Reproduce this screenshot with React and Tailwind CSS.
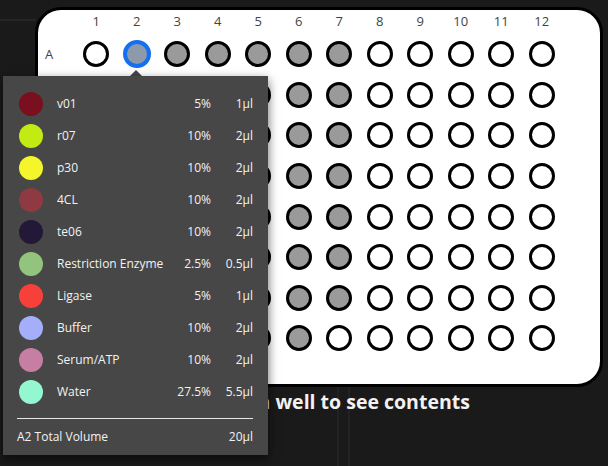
import React from 'react';

const COLS = [1, 2, 3, 4, 5, 6, 7, 8, 9, 10, 11, 12];
const ROWS = ['A', 'B', 'C', 'D', 'E', 'F', 'G', 'H'];

const ingredients = [
    { name: 'v01', color: '#7a0f1f', pct: '5%', vol: '1µl' },
    { name: 'r07', color: '#c2eb12', pct: '10%', vol: '2µl' },
    { name: 'p30', color: '#f5f52c', pct: '10%', vol: '2µl' },
    { name: '4CL', color: '#8f3a42', pct: '10%', vol: '2µl' },
    { name: 'te06', color: '#241838', pct: '10%', vol: '2µl' },
    { name: 'Restriction Enzyme', color: '#93c47d', pct: '2.5%', vol: '0.5µl' },
    { name: 'Ligase', color: '#f8403a', pct: '5%', vol: '1µl' },
    { name: 'Buffer', color: '#a4aefa', pct: '10%', vol: '2µl' },
    { name: 'Serum/ATP', color: '#c67ea2', pct: '10%', vol: '2µl' },
    { name: 'Water', color: '#93f7d0', pct: '27.5%', vol: '5.5µl' },
];

function isFilled(row, col) {
    if (col < 3) return false;
    if (row === 'H' && col === 7) return false;
    return col <= 7;
}

function Well({ row, col }) {
    if (row === 'A' && col === 2) {
        return <div className="w-[28px] h-[28px] rounded-full border-[4px] border-[#1570ee] bg-[#8e9aab]" />;
    }
    return (
        <div
            className={`w-[26px] h-[26px] rounded-full border-[3px] border-black ${isFilled(row, col) ? 'bg-[#9a9a9a]' : 'bg-white'}`}
        />
    );
}

export default function App() {
    return (
        <div
            className="relative w-[608px] h-[466px] overflow-hidden bg-[#1a1a1a]"
            style={{ fontFamily: '"Open Sans", "Liberation Sans", sans-serif' }}
        >
            {/* faint panel edges in the background */}
            <div className="absolute left-0 top-[19px] w-[36px] h-[2px] bg-[#262626]" />
            <div className="absolute left-[337px] top-[386px] w-[2px] h-[80px] bg-[#222]" />
            <div className="absolute left-[348px] top-[386px] w-[2px] h-[80px] bg-[#222]" />

            <div className="relative pt-[7px] pl-[35px]">
                <div className="w-[568px] h-[380px] rounded-[26px] border-[3px] border-black bg-white">
                    <div className="grid grid-cols-[38px_repeat(12,40.5px)] grid-rows-[24px_repeat(8,40.6px)]">
                        <div />
                        {COLS.map((c) => (
                            <div key={c} className="flex items-center justify-center text-[13px] text-[#444]">
                                {c}
                            </div>
                        ))}
                        {ROWS.map((r) => (
                            <React.Fragment key={r}>
                                <div className="flex items-center pl-[7px] text-[13px] text-[#444]">{r}</div>
                                {COLS.map((c) => (
                                    <div key={c} className="flex items-center justify-center">
                                        <Well row={r} col={c} />
                                    </div>
                                ))}
                            </React.Fragment>
                        ))}
                    </div>
                </div>
                <div className="w-[577px] text-center text-[19.5px] font-bold text-[#f2f2f2] leading-[30px]">
                    Click on a well to see contents
                </div>
            </div>

            {/* tooltip for A2 */}
            <div className="absolute left-[130px] top-[70px] w-0 h-0 border-l-[6px] border-r-[6px] border-b-[6px] border-l-transparent border-r-transparent border-b-[#474747]" />
            <div className="absolute left-[3px] top-[76px] w-[265px] h-[379px] bg-[#474747] shadow-[0_4px_10px_rgba(0,0,0,0.6)] pt-[12px] pl-[14px] pr-[15px] text-[#f2f2f2] text-[12px]">
                {ingredients.map((ing) => (
                    <div key={ing.name} className="flex items-center h-[32px]">
                        <div className="w-[24px] h-[24px] rounded-full ml-[2px]" style={{ backgroundColor: ing.color }} />
                        <div className="ml-[14px] flex-1 whitespace-nowrap">{ing.name}</div>
                        <div className="text-right">{ing.pct}</div>
                        <div className="w-[42px] text-right">{ing.vol}</div>
                    </div>
                ))}
                <div className="mt-[10px] h-px bg-[#e6e6e6]" />
                <div className="flex items-center justify-between h-[36px]">
                    <span>A2 Total Volume</span>
                    <span>20µl</span>
                </div>
            </div>
        </div>
    );
}
